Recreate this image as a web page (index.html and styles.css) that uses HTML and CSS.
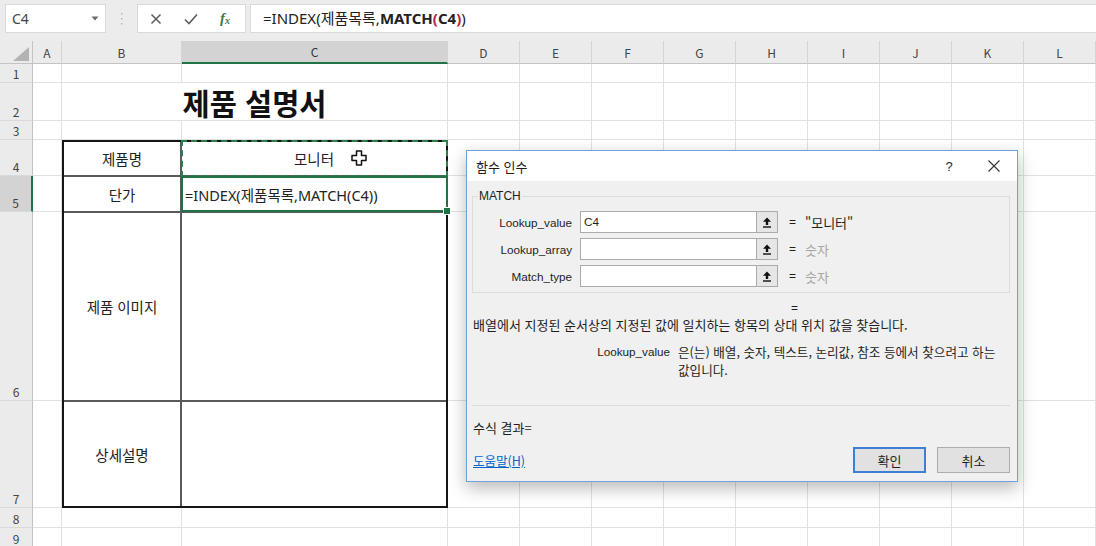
FILE: index.html
```html
<!DOCTYPE html>
<html lang="ko">
<head>
<meta charset="utf-8">
<title>제품 설명서</title>
<link rel="stylesheet" href="styles.css">
</head>
<body>
<div class="fbar">
  <div class="namebox"><span>C4</span><svg class="dd" width="8" height="5" viewBox="0 0 8 5"><path d="M0.5 0.5 H7.5 L4 4.5 Z" fill="#6b6b6b"/></svg></div>
  <div class="grip"><svg width="3" height="12" viewBox="0 0 3 12"><rect x="1" y="0" width="1.5" height="1.5" fill="#b5b5b5"/><rect x="1" y="5" width="1.5" height="1.5" fill="#b5b5b5"/><rect x="1" y="10" width="1.5" height="1.5" fill="#b5b5b5"/></svg></div>
  <div class="fbtns">
    <svg class="ic-x" width="12" height="12" viewBox="0 0 12 12"><path d="M1.5 1.5 L10.5 10.5 M10.5 1.5 L1.5 10.5" stroke="#5c5c5c" stroke-width="1.5" fill="none"/></svg>
    <svg class="ic-ok" width="14" height="12" viewBox="0 0 14 12"><path d="M1 6.5 L5 10.5 L13 1.5" stroke="#5c5c5c" stroke-width="1.6" fill="none"/></svg>
    <span class="fx"><i>f</i><sub>x</sub></span>
  </div>
  <div class="finput">=INDEX(제품목록,<b>MATCH<span class="pr">(</span>C4<span class="pr">)</span></b>)</div>
</div>

<div class="sheet">
  <div class="corner"><svg width="16" height="14" viewBox="0 0 16 14"><path d="M16 0 V14 H0 Z" fill="#b3b3b3"/></svg></div>
  <div class="ch">A</div>
  <div class="ch">B</div>
  <div class="ch sel">C</div>
  <div class="ch">D</div>
  <div class="ch">E</div>
  <div class="ch">F</div>
  <div class="ch">G</div>
  <div class="ch">H</div>
  <div class="ch">I</div>
  <div class="ch">J</div>
  <div class="ch">K</div>
  <div class="ch">L</div>

  <div class="rh">1</div>
  <div class="c"></div><div class="c"></div><div class="c"></div><div class="c"></div><div class="c"></div><div class="c"></div><div class="c"></div><div class="c"></div><div class="c"></div><div class="c"></div><div class="c"></div><div class="c"></div>

  <div class="rh">2</div>
  <div class="c"></div>
  <div class="title">제품 설명서</div>
  <div class="c"></div><div class="c"></div><div class="c"></div><div class="c"></div><div class="c"></div><div class="c"></div><div class="c"></div><div class="c"></div><div class="c"></div>

  <div class="rh">3</div>
  <div class="c"></div><div class="c"></div><div class="c"></div><div class="c"></div><div class="c"></div><div class="c"></div><div class="c"></div><div class="c"></div><div class="c"></div><div class="c"></div><div class="c"></div><div class="c"></div>

  <div class="tbl">
    <div class="tc lab">제품명</div>
    <div class="tc val copy">모니터<svg class="cursor" width="16" height="16" viewBox="0 0 16 16"><path d="M5.5 1 H10.5 V5.5 H15 V10.5 H10.5 V15 H5.5 V10.5 H1 V5.5 H5.5 Z" fill="#fff" stroke="#111" stroke-width="1.5" stroke-linejoin="round"/></svg></div>
    <div class="tc lab">단가</div>
    <div class="tc val act">=INDEX(제품목록,MATCH(C4))</div>
    <div class="tc lab">제품 이미지</div>
    <div class="tc val"></div>
    <div class="tc lab last">상세설명</div>
    <div class="tc val last"></div>
  </div>

  <div class="rh">4</div>
  <div class="c"></div>
  <div class="c"></div><div class="c"></div><div class="c"></div><div class="c"></div><div class="c"></div><div class="c"></div><div class="c"></div><div class="c"></div><div class="c"></div>

  <div class="rh sel">5</div>
  <div class="c"></div>
  <div class="c"></div><div class="c"></div><div class="c"></div><div class="c"></div><div class="c"></div><div class="c"></div><div class="c"></div><div class="c"></div><div class="c"></div>

  <div class="rh">6</div>
  <div class="c"></div>
  <div class="c"></div><div class="c"></div><div class="c"></div><div class="c"></div><div class="c"></div><div class="c"></div><div class="c"></div><div class="c"></div><div class="c"></div>

  <div class="rh">7</div>
  <div class="c"></div>
  <div class="c"></div><div class="c"></div><div class="c"></div><div class="c"></div><div class="c"></div><div class="c"></div><div class="c"></div><div class="c"></div><div class="c"></div>

  <div class="rh">8</div>
  <div class="c"></div><div class="c"></div><div class="c"></div><div class="c"></div><div class="c"></div><div class="c"></div><div class="c"></div><div class="c"></div><div class="c"></div><div class="c"></div><div class="c"></div><div class="c"></div>

  <div class="rh">9</div>
  <div class="c"></div><div class="c"></div><div class="c"></div><div class="c"></div><div class="c"></div><div class="c"></div><div class="c"></div><div class="c"></div><div class="c"></div><div class="c"></div><div class="c"></div><div class="c"></div>
</div>

<div class="dlg">
  <div class="dlg-title">
    <span class="t">함수 인수</span>
    <span class="q">?</span>
    <span class="close"><svg width="12" height="12" viewBox="0 0 12 12"><path d="M0.5 0.5 L11.5 11.5 M11.5 0.5 L0.5 11.5" stroke="#333" stroke-width="1.1" fill="none"/></svg></span>
  </div>
  <div class="dlg-body">
    <fieldset class="grp">
      <legend>MATCH</legend>
      <div class="arg">
        <span class="an">Lookup_value</span>
        <div class="inp">C4</div>
        <div class="ref"><svg width="10" height="11" viewBox="0 0 10 11"><path d="M5 0.5 L1 4.8 H3.8 V8 H6.2 V4.8 H9 Z" fill="#111"/><rect x="1" y="9.3" width="8" height="1.4" fill="#111"/></svg></div>
        <div class="res"><span class="eq">=</span><span class="rv">"모니터"</span></div>
      </div>
      <div class="arg">
        <span class="an">Lookup_array</span>
        <div class="inp"></div>
        <div class="ref"><svg width="10" height="11" viewBox="0 0 10 11"><path d="M5 0.5 L1 4.8 H3.8 V8 H6.2 V4.8 H9 Z" fill="#111"/><rect x="1" y="9.3" width="8" height="1.4" fill="#111"/></svg></div>
        <div class="res"><span class="eq">=</span><span class="rv dim">숫자</span></div>
      </div>
      <div class="arg">
        <span class="an">Match_type</span>
        <div class="inp"></div>
        <div class="ref"><svg width="10" height="11" viewBox="0 0 10 11"><path d="M5 0.5 L1 4.8 H3.8 V8 H6.2 V4.8 H9 Z" fill="#111"/><rect x="1" y="9.3" width="8" height="1.4" fill="#111"/></svg></div>
        <div class="res"><span class="eq">=</span><span class="rv dim">숫자</span></div>
      </div>
    </fieldset>
    <div class="res-eq">=</div>
    <p class="desc">배열에서 지정된 순서상의 지정된 값에 일치하는 항목의 상대 위치 값을 찾습니다.</p>
    <div class="argdesc">
      <span class="adn">Lookup_value</span>
      <span class="adt">은(는) 배열, 숫자, 텍스트, 논리값, 참조 등에서 찾으려고 하는<br>값입니다.</span>
    </div>
    <div class="sep"></div>
    <div class="result">수식 결과=</div>
    <div class="foot">
      <a class="help" href="#">도움말(H)</a>
      <button class="btn ok">확인</button>
      <button class="btn cancel">취소</button>
    </div>
  </div>
</div>
</body>
</html>
```
FILE: styles.css
```css
* { box-sizing: border-box; margin: 0; padding: 0; }
html, body { width: 1096px; height: 546px; overflow: hidden; background: #fff; }
body {
  position: relative;
  font-family: "Noto Sans CJK KR", "Noto Sans", sans-serif;
  color: #222;
}

/* formula bar */
.fbar {
  height: 41px;
  background: #ececec;
  display: flex;
  align-items: flex-start;
  padding-top: 4px;
}
.namebox {
  margin-left: 5px;
  width: 101px;
  height: 29px;
  background: #fff;
  border: 1px solid #d9d9d9;
  display: flex;
  align-items: center;
  justify-content: space-between;
  padding: 0 6px 0 6px;
  font-family: "Noto Sans", "Noto Sans CJK KR", sans-serif;
  font-size: 14px;
  color: #444;
}
.grip { width: 31px; height: 29px; display: flex; align-items: center; justify-content: center; }
.fbtns {
  width: 109px;
  height: 29px;
  background: #fff;
  border: 1px solid #d9d9d9;
  display: flex;
  align-items: center;
  padding-left: 12px;
}
.ic-x { margin-right: 22px; }
.ic-ok { margin-right: 22px; }
.fx {
  font-family: "Liberation Serif", serif;
  color: #3d7a4f;
  font-size: 15px;
  font-weight: 700;
  line-height: 1;
}
.fx sub { font-size: 10px; font-style: italic; vertical-align: -1px; }
.finput {
  margin-left: 4px;
  flex: 1;
  height: 29px;
  background: #fff;
  border: 1px solid #d9d9d9;
  border-right: none;
  padding-left: 12px;
  font-family: "Noto Sans", "Noto Sans CJK KR", sans-serif;
  font-size: 15px;
  line-height: 27px;
  color: #222;
  white-space: nowrap;
}
.finput b { font-weight: 700; }
.finput .pr { color: #b4233a; }

/* sheet grid */
.sheet {
  display: grid;
  grid-template-columns: 33px 29px 120px 266px repeat(9, 72px);
  grid-template-rows: 23px 19px 38px 19px 36px 36px 189px 107px 20px 20px;
}
.c { border-right: 1px solid #e1e1e1; border-bottom: 1px solid #e1e1e1; }
.corner {
  background: #ebebeb;
  border-right: 1px solid #c3c3c3;
  border-bottom: 1px solid #c3c3c3;
  display: flex;
  align-items: flex-end;
  justify-content: flex-end;
  padding: 0 3px 2px 0;
}
.ch {
  background: #ebebeb;
  border-right: 1px solid #d4d4d4;
  border-bottom: 1px solid #c3c3c3;
  display: flex;
  align-items: center;
  justify-content: center;
  font-size: 12px;
  color: #444;
}
.ch.sel { background: #d3d3d3; border-bottom: 2px solid #217346; color: #333; }
.rh {
  background: #ebebeb;
  border-right: 1px solid #c3c3c3;
  border-bottom: 1px solid #d9d9d9;
  display: flex;
  align-items: flex-end;
  justify-content: center;
  font-size: 12px;
  line-height: 15px;
  color: #444;
  padding-bottom: 1px;
}
.rh.sel { background: #d3d3d3; border-right: 2px solid #217346; }

.title {
  grid-column: 3 / 5;
  grid-row: 3;
  border-right: 1px solid #e1e1e1;
  border-bottom: 1px solid #e1e1e1;
  display: flex;
  align-items: center;
  justify-content: center;
  font-size: 29.5px;
  font-weight: 700;
  color: #111;
}

/* bordered product table */
.tbl {
  grid-column: 3 / 5;
  grid-row: 5 / 9;
  border: 2px solid #151515;
  background: #fff;
  display: grid;
  grid-template-columns: 118px 1fr;
  grid-template-rows: 35px 36px 189px 1fr;
}
.tc {
  border-bottom: 2px solid #5a5a5a;
  font-family: "Noto Sans", "Noto Sans CJK KR", sans-serif;
  font-size: 14.5px;
  color: #222;
  display: flex;
  align-items: center;
  white-space: nowrap;
}
.tc.last { border-bottom: none; }
.lab { border-right: 2px solid #5a5a5a; justify-content: center; }
.val { justify-content: center; position: relative; }
.val.act { justify-content: flex-start; padding-left: 3px; }
.copy::after {
  content: "";
  position: absolute;
  top: -2px; left: -1px; right: -2px; bottom: -2px;
  border: 2px dashed #2e7d4f;
}
.act::after {
  content: "";
  position: absolute;
  top: -1px; left: -1px; right: -2px; bottom: -1px;
  border: 2px solid #217346;
}
.act::before {
  content: "";
  position: absolute;
  right: -5px; bottom: -4px;
  width: 6px; height: 6px;
  background: #217346;
  border: 1px solid #fff;
  z-index: 2;
}
.cursor { position: absolute; left: 169px; top: 8px; z-index: 3; }

/* dialog */
.dlg {
  position: absolute;
  left: 466px;
  top: 150px;
  width: 552px;
  height: 332px;
  border: 1px solid #6ea2da;
  background: #f0f0f0;
  box-shadow: 0 6px 16px rgba(0, 0, 0, 0.28);
  display: flex;
  flex-direction: column;
  font-size: 13px;
  color: #1e1e1e;
}
.dlg-title {
  height: 30px;
  background: #fff;
  display: flex;
  align-items: center;
  padding-left: 9px;
}
.dlg-title .t { flex: 1; }
.dlg-title .q { width: 20px; text-align: center; margin-right: 12px; font-family: "Liberation Sans", sans-serif; font-size: 13px; }
.dlg-title .close { width: 46px; height: 30px; display: flex; align-items: center; justify-content: center; }

.dlg-body {
  flex: 1;
  padding: 7px 7px 7px 5px;
  display: flex;
  flex-direction: column;
}
.grp {
  border: 1px solid #dcdcdc;
  margin: 0;
  padding: 7px 0 5px 0;
  min-width: 0;
}
.grp legend {
  margin-left: 5px;
  padding: 0 1px;
  font-family: "Liberation Sans", sans-serif;
  font-size: 12px;
  line-height: 16px;
}
.arg {
  display: grid;
  grid-template-columns: 107px 176px 22px 1fr;
  height: 22px;
  align-items: center;
  margin-bottom: 5px;
}
.arg:last-child { margin-bottom: 0; }
.an, .adn, .inp { font-family: "Liberation Sans", "Noto Sans CJK KR", sans-serif; font-size: 11.7px; }
.an { text-align: right; padding-right: 8px; }
.inp {
  height: 22px;
  background: #fff;
  border: 1px solid #ababab;
  border-right: none;
  padding-left: 3px;
  line-height: 20px;
}
.ref {
  height: 22px;
  background: #e6e6e6;
  border: 1px solid #ababab;
  display: flex;
  align-items: center;
  justify-content: center;
}
.res { display: flex; align-items: center; white-space: nowrap; }
.eq { margin-left: 11px; font-family: "Liberation Sans", sans-serif; font-size: 12px; }
.rv { margin-left: 9px; }
.rv.dim { color: #a6a6a6; }

.res-eq { margin-top: 7px; line-height: 16px; padding-left: 319px; font-family: "Liberation Sans", sans-serif; font-size: 12px; }
.desc { margin-top: 1px; margin-left: 1px; line-height: 16px; white-space: nowrap; }
.argdesc {
  margin-top: 10px;
  display: grid;
  grid-template-columns: 198px 1fr;
  column-gap: 8px;
  line-height: 18px;
}
.adn { text-align: right; }
.adt { white-space: nowrap; font-size: 12.6px; }
.sep { margin-top: 26px; border-top: 1px solid #dcdcdc; }
.result { margin-top: 14px; line-height: 16px; margin-left: 1px; }
.foot { margin-top: 11px; height: 26px; display: flex; align-items: center; }
.help { flex: 1; color: #0066cc; text-decoration: underline; margin-left: 1px; font-size: 12.5px; }
.btn {
  width: 73px;
  height: 26px;
  font-family: inherit;
  font-size: 13px;
  color: #1e1e1e;
  background: #e1e1e1;
  border: 1px solid #adadad;
}
.btn.ok { border: 2px solid #3c7fd4; }
.btn.cancel { margin-left: 11px; }
```
